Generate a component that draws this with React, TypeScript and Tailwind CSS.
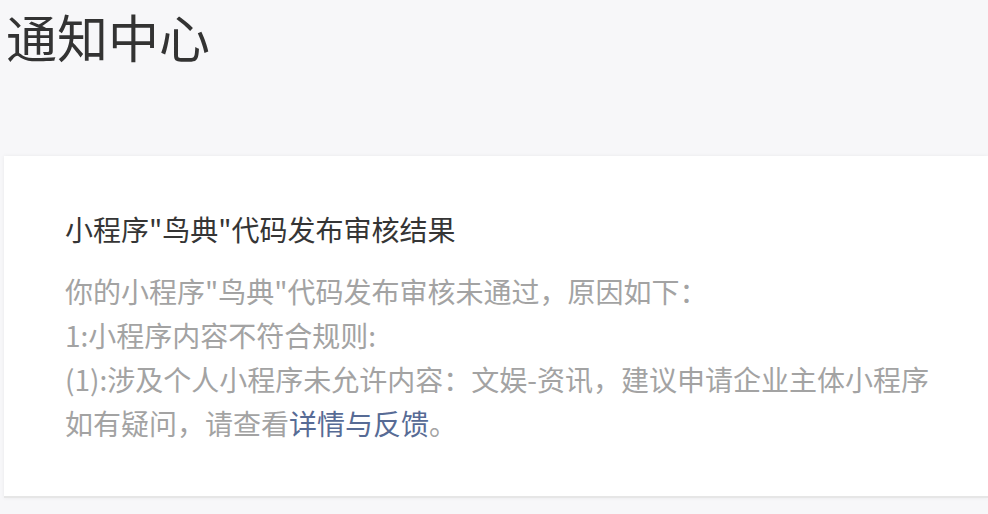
export default function App() {
  return (
    <div
      className="w-[988px] h-[514px] overflow-hidden bg-[#f7f7f9]"
      style={{ fontFamily: '"Noto Sans CJK SC", "Noto Sans", sans-serif' }}
    >
      <h1 className="pl-[6px] pt-[1px] text-[51px] leading-[70px] text-[#333333] font-normal">
        通知中心
      </h1>
      <div className="ml-[4px] mt-[85px] h-[342px] bg-white border-b-2 border-[#e6e6e6] shadow-[0_0_4px_rgba(0,0,0,0.06)] pl-[61px] pt-[53px]">
        <div className="text-[28px] leading-[40px] text-[#353535]">
          小程序"鸟典"代码发布审核结果
        </div>
        <div className="mt-[20px] text-[28px] leading-[44px] text-[#a3a3a3]">
          <p>你的小程序"鸟典"代码发布审核未通过，原因如下：</p>
          <p>1:小程序内容不符合规则:</p>
          <p>(1):涉及个人小程序未允许内容：文娱-资讯，建议申请企业主体小程序</p>
          <p>
            如有疑问，请查看<span className="text-[#576b95]">详情与反馈</span>。
          </p>
        </div>
      </div>
    </div>
  );
}
